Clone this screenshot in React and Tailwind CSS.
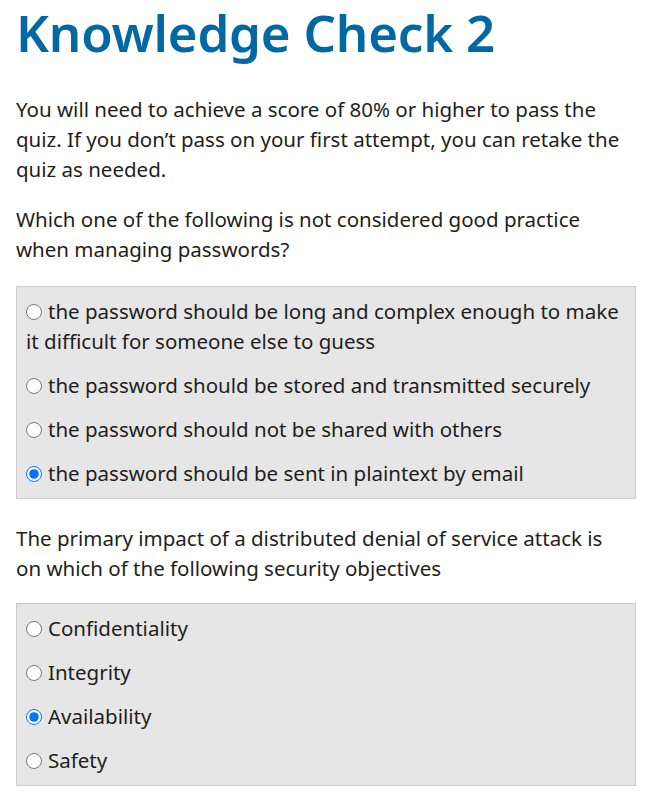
import React from "react";

const Option = ({ name, children, checked }) => (
  <label className="block leading-[30px] whitespace-nowrap">
    <input
      type="radio"
      name={name}
      defaultChecked={checked}
      className="m-0 mr-[6px] w-[16px] h-[16px] align-middle relative top-[-2px]"
    />
    {children}
  </label>
);

const boxCls =
  "border border-[#cccccc] bg-[#e6e6e6] pl-[9px] pr-[6px] pt-[9px] pb-[10px] flex flex-col gap-[14px] text-[20.5px]";

export default function App() {
  return (
    <div className="bg-white text-[#1e1e1e] font-['Noto_Sans',sans-serif] pl-4 pr-3 pb-4 w-[648px] min-h-[801px]">
      <h1 className="text-[51px] leading-[65px] tracking-[-0.2px] font-semibold text-[#0068a3] m-0 whitespace-nowrap">
        Knowledge Check 2
      </h1>
      <p className="mt-[29px] text-[20.5px] leading-[30px] whitespace-nowrap">
        You will need to achieve a score of 80% or higher to pass the
        <br />
        quiz. If you don’t pass on your first attempt, you can retake the
        <br />
        quiz as needed.
      </p>
      <p className="mt-[20px] text-[20.5px] leading-[30px] whitespace-nowrap">
        Which one of the following is not considered good practice
        <br />
        when managing passwords?
      </p>
      <div className={"mt-[22px] " + boxCls}>
        <Option name="q1">
          the password should be long and complex enough to make
          <br />
          it difficult for someone else to guess
        </Option>
        <Option name="q1">the password should be stored and transmitted securely</Option>
        <Option name="q1">the password should not be shared with others</Option>
        <Option name="q1" checked>
          the password should be sent in plaintext by email
        </Option>
      </div>
      <p className="mt-[24px] text-[20.5px] leading-[30px] whitespace-nowrap">
        The primary impact of a distributed denial of service attack is
        <br />
        on which of the following security objectives
      </p>
      <div className={"mt-[20px] " + boxCls}>
        <Option name="q2">Confidentiality</Option>
        <Option name="q2">Integrity</Option>
        <Option name="q2" checked>
          Availability
        </Option>
        <Option name="q2">Safety</Option>
      </div>
    </div>
  );
}
